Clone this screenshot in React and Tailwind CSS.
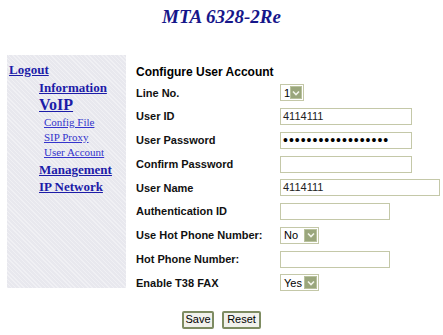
const serif = { fontFamily: '"Liberation Serif", "Times New Roman", serif' };

const NavLink = ({ children, className }) => (
  <a href="#" className={"block underline text-[#1c1ca8] " + className}>
    {children}
  </a>
);

const TextBox = ({ width, value, password }) => (
  <div
    className={`${width} h-[17px] border border-[#c4c8a8] bg-white flex items-center px-[2px] text-[11px] text-[#222] leading-none`}
  >
    {password ? (
      <span className="text-[14px] tracking-[1px] text-black">{value}</span>
    ) : (
      value
    )}
  </div>
);

const Select = ({ width, value }) => (
  <div
    className={`${width} h-[17px] border border-[#c4c8a8] bg-white flex items-center justify-between pl-[3px] pr-[1px] text-[11px] text-black`}
  >
    <span>{value}</span>
    <span className="w-[13px] h-[13px] bg-[#9aa67c] border border-[#b9c29d] flex items-center justify-center">
      <svg width="8" height="6" viewBox="0 0 8 6">
        <path d="M1 1.5 L4 4.5 L7 1.5" stroke="#f2f4ea" strokeWidth="1.6" fill="none" />
      </svg>
    </span>
  </div>
);

const rows = [
  { label: "Line No.", field: <Select width="w-[24px]" value="1" /> },
  { label: "User ID", field: <TextBox width="w-[132px]" value="4114111" /> },
  { label: "User Password", field: <TextBox width="w-[132px]" value={"•".repeat(18)} password /> },
  { label: "Confirm Password", field: <TextBox width="w-[132px]" value="" /> },
  { label: "User Name", field: <TextBox width="w-[160px]" value="4114111" /> },
  { label: "Authentication ID", field: <TextBox width="w-[110px]" value="" /> },
  { label: "Use Hot Phone Number:", field: <Select width="w-[39px]" value="No" /> },
  { label: "Hot Phone Number:", field: <TextBox width="w-[110px]" value="" /> },
  { label: "Enable T38 FAX", field: <Select width="w-[39px]" value="Yes" /> },
];

const Button = ({ children, width }) => (
  <button
    className={`${width} h-[18px] border-2 border-[#7e8c62] rounded-[2px] bg-[#f1f1ec] text-[11px] text-black leading-none`}
  >
    {children}
  </button>
);

export default function App() {
  return (
    <div
      className="w-[443px] h-[335px] bg-white overflow-hidden"
      style={{ fontFamily: '"Liberation Sans", Arial, sans-serif' }}
    >
      <h1
        className="text-center text-[19px] font-bold italic text-[#16168a] pt-[6px] leading-[22px]"
        style={serif}
      >
        MTA 6328-2Re
      </h1>

      <div className="flex mt-[27px]">
        <nav
          className="ml-[7px] w-[119px] h-[233px] bg-[#e8e8ee] pt-[7px] font-bold"
          style={{
            ...serif,
            backgroundImage:
              "repeating-linear-gradient(45deg, rgba(255,255,255,0.35) 0 1px, transparent 1px 3px)",
          }}
        >
          <NavLink className="ml-[2px] text-[13px] leading-[16px]">Logout</NavLink>
          <NavLink className="ml-[32px] text-[13px] leading-[17px] mt-[1px]">Information</NavLink>
          <NavLink className="ml-[32px] text-[16px] leading-[17px]">VoIP</NavLink>
          <div className="ml-[37px] mt-[2px] font-normal text-[11px] leading-[15px]">
            <NavLink className="text-[#3434cc]">Config File</NavLink>
            <NavLink className="text-[#3434cc]">SIP Proxy</NavLink>
            <NavLink className="text-[#3434cc]">User Account</NavLink>
          </div>
          <NavLink className="ml-[32px] text-[13px] leading-[17px] mt-[1px]">Management</NavLink>
          <NavLink className="ml-[32px] text-[13px] leading-[17px]">IP Network</NavLink>
        </nav>

        <div className="ml-[10px] flex flex-col">
          <h2 className="text-[12px] font-bold text-black leading-[16px] mt-[9px] mb-[1px]">
            Configure User Account
          </h2>
          {rows.map((r) => (
            <div key={r.label} className="flex items-center h-[23.75px]">
              <span className="w-[144px] text-[11px] font-bold text-[#111]">{r.label}</span>
              {r.field}
            </div>
          ))}
        </div>
      </div>

      <div className="flex justify-center gap-[8px] mt-[16px]">
        <Button width="w-[32px]">Save</Button>
        <Button width="w-[39px]">Reset</Button>
      </div>
    </div>
  );
}
